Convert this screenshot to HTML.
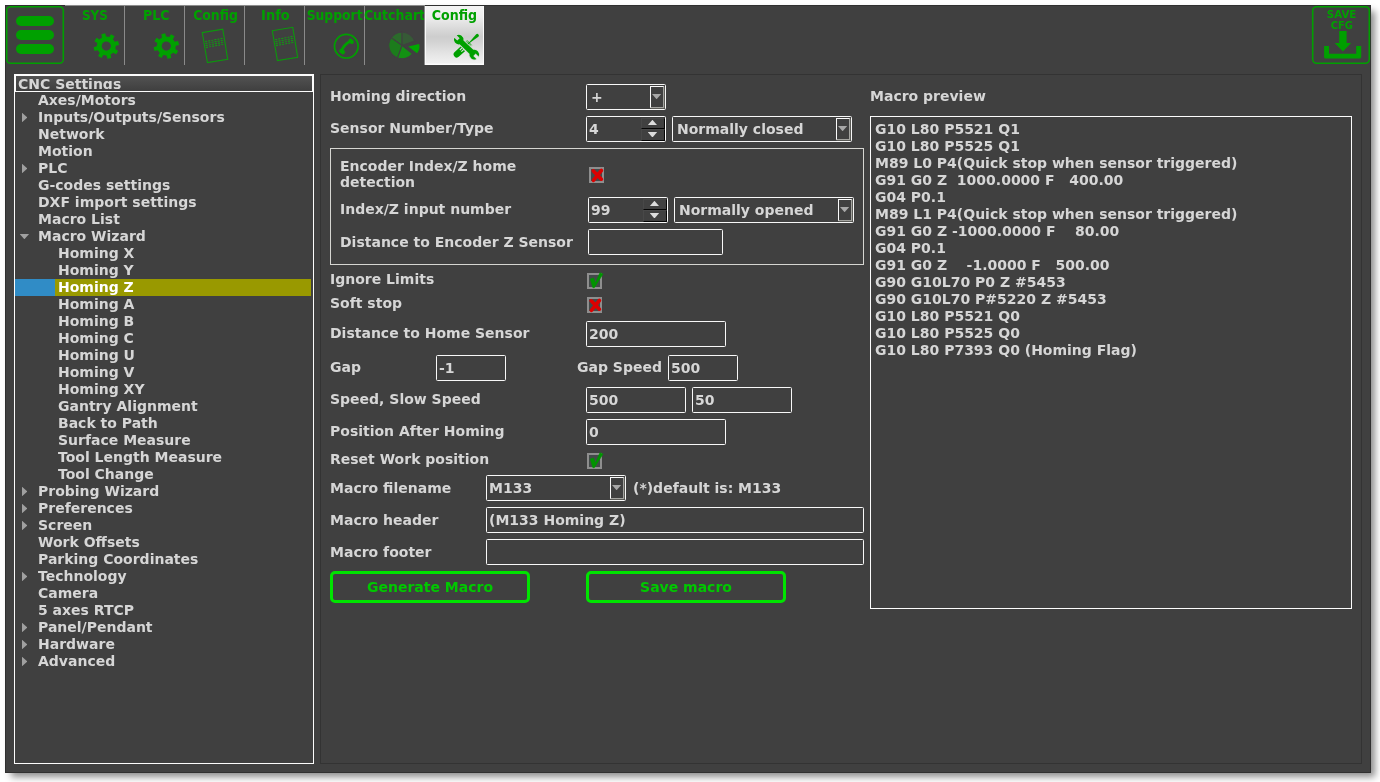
<!DOCTYPE html>
<html lang="en">
<head>
<meta charset="utf-8">
<title>CNC Settings - Macro Wizard - Homing Z</title>
<style>
*{box-sizing:border-box;margin:0;padding:0}
html,body{width:1380px;height:782px;overflow:hidden;background:#fff}
body{position:relative;font-family:"DejaVu Sans","Liberation Sans",sans-serif;font-weight:bold;font-size:14px;color:#d6d6d6;line-height:17px}
.abs{position:absolute}
#root{position:absolute;left:0;top:0;width:1380px;height:782px;background:#fff;will-change:transform;overflow:hidden}
#win{position:absolute;left:5px;top:5px;width:1366px;height:768px;background:#404040;border:1px solid #303030;box-shadow:5px 5px 7px -1px rgba(0,0,0,.45)}
/* toolbar */
.sq{position:absolute;width:58px;height:58px}
.bar{position:absolute;left:10px;width:38px;height:10.300px;border-radius:5.2px;background:#00a000}
.sep{position:absolute;top:6px;width:1px;height:59px;background:#8a8a8a}
.tab{position:absolute;top:6px;width:60px;height:59px;color:#00a000;text-align:center}
.tab b{position:absolute;left:-10px;right:-10px;top:.8px;font-family:"DejaVu Sans","Liberation Sans",sans-serif;font-size:13.5px;line-height:16px;font-weight:bold;white-space:nowrap;display:block;transform-origin:50% 50%}
.savetxt{left:-10px;right:-10px;top:4.300px;text-align:center;color:#00a000;font-family:"DejaVu Sans","Liberation Sans",sans-serif;font-size:11px;line-height:10.7px;transform:scaleX(.93)}
.tab svg{position:absolute}
.tab.act{width:59px;background:linear-gradient(#f4f4f4 0%,#ececec 20%,#d8d8d8 40%,#cdcdcd 52%,#d2d2d2 60%,#e4e4e4 80%,#f0f0f0 96%,#ffffff 100%);box-shadow:inset 1px 0 0 #fafafa,inset -1px 0 0 #fafafa}
/* tree */
#tree{position:absolute;left:14px;top:74px;width:300px;height:690px;border:1px solid #fcfcfc;background:#404040;overflow:hidden}
#thead{position:absolute;left:0;top:0;width:298px;height:17px;border:1px solid #fcfcfc;background:linear-gradient(#525252,#3f3f3f);overflow:hidden}
#thead .clip{position:absolute;left:0;top:0;right:0;height:13px;overflow:hidden}
#thead span{position:absolute;left:2px;top:0px;line-height:17px;white-space:nowrap}
#rows{position:absolute;left:0;top:17px;width:298px}
.row{position:relative;height:17px;line-height:17px;white-space:nowrap}
.row span{position:absolute;left:23px;top:0}
.row.c span{left:43px}
.row.sel{background:linear-gradient(90deg,#308cc6 0,#308cc6 40px,#999900 40px,#999900 296px,#404040 296px);color:#fff}
.ar{position:absolute;left:7px;top:3.800px;width:5.4px;height:9.5px;background:#a0a0a0;clip-path:polygon(0 0,100% 50%,0 100%)}
.ad{position:absolute;left:4.700px;top:6px;width:9.4px;height:5.2px;background:#a0a0a0;clip-path:polygon(0 0,100% 0,50% 100%)}
/* right panel */
#panel{position:absolute;left:320px;top:74px;width:1042px;height:690px;border:1px solid #333;background:#404040}
.lbl{position:absolute;white-space:nowrap;line-height:17px}
.inp{position:absolute;height:26px;border-radius:1.5px;border:1px solid #f8f8f8;background:#404040;line-height:24px;padding-left:2px;white-space:nowrap;overflow:hidden}
.cmb .dd{position:absolute;right:1px;top:1px;bottom:1px;width:14px;border:1px solid #fafafa;border-right:1px solid #a4a4a0;border-bottom:1px solid #a4a4a0;box-shadow:.5px .5px 0 #77776f}
.cmb .dd:after{content:"";position:absolute;left:1px;top:7px;width:9.2px;height:5.2px;background:#a8a8a8;clip-path:polygon(0 0,100% 0,50% 100%)}
.ne{padding-left:4px}
.spn .up,.spn .dn{position:absolute;right:0;width:24px;border:1px solid #484848;border-right-color:#050505;border-bottom-color:#050505}
.spn .up{top:1px;height:11px}
.spn .dn{top:12px;height:12px}
.spn .up:after{content:"";position:absolute;left:5.700px;top:.7px;width:9.5px;height:5.5px;background:#dcdcdc;clip-path:polygon(50% 0,100% 100%,0 100%)}
.spn .dn:after{content:"";position:absolute;left:5.700px;top:1.900px;width:9.5px;height:5.5px;background:#dcdcdc;clip-path:polygon(0 0,100% 0,50% 100%)}
.chk{position:absolute;width:15px;height:16px;border:2px solid #8e8e8e;background:#444a4a}
.chk svg{position:absolute;left:-4px;top:-4px}
.grp{position:absolute;border:1px solid #d6d6d2}
.btn{position:absolute;height:32px;width:200px;border:3px solid #00e400;border-radius:5px;color:#00c800;text-align:center;line-height:26px}
#prev{position:absolute;left:870px;top:116px;width:482px;height:493px;border:1px solid #fcfcfc;padding:4px 4px;white-space:pre;line-height:17px}
</style>
</head>
<body>
<div id="root">
<div id="win"></div>

<!-- toolbar -->
<div class="abs" style="left:65px;top:5px;width:360px;height:1px;background:#8c8c8c"></div>
<div class="sq" style="left:6px;top:6px"><div class="bar" style="top:10px"></div><div class="bar" style="top:23.8px"></div><div class="bar" style="top:37.6px"></div></div>
<div class="tab" style="left:65px"><b style="transform:scaleX(.885);margin-left:.3px">SYS</b></div>
<div class="sep" style="left:124px"></div>
<div class="tab" style="left:125px"><b style="transform:scaleX(.935);margin-left:1.5px">PLC</b></div>
<div class="sep" style="left:184px"></div>
<div class="tab" style="left:185px"><b style="transform:scaleX(.925);margin-left:.9px">Config</b></div>
<div class="sep" style="left:244px"></div>
<div class="tab" style="left:245px"><b style="transform:scaleX(.96);margin-left:1.2px">Info</b></div>
<div class="sep" style="left:304px"></div>
<div class="tab" style="left:305px"><b style="transform:scaleX(.916);margin-left:-1.2px">Support</b></div>
<div class="sep" style="left:364px"></div>
<div class="tab" style="left:365px"><b style="transform:scaleX(.93);margin-left:-1px">Cutchart</b></div>
<div class="sep" style="left:424px"></div>
<div class="tab act" style="left:425px"><b style="transform:scaleX(.935)">Config</b></div>
<div class="sq" style="left:1312px;top:6px">
<div class="abs savetxt" style="margin-left:.8px">SAVE</div><div class="abs savetxt" style="top:15px;margin-left:.5px;transform:scaleX(.9)">CFG</div>
</div>
<svg class="abs" style="left:0;top:0" width="1380" height="70" viewBox="0 0 1380 70"><rect x="6.7" y="6.7" width="56.6" height="56.6" rx="4" fill="none" stroke="#00a000" stroke-width="1.600"/><rect x="1312.7" y="6.7" width="56.6" height="56.6" rx="4" fill="none" stroke="#00a000" stroke-width="1.600"/><path d="M102.05 37.61 L101.30 34.32 L105.18 33.35 L106.07 36.60 L109.30 37.09 L111.09 34.23 L114.53 36.29 L112.85 39.22 L114.79 41.85 L118.08 41.10 L119.05 44.98 L115.80 45.87 L115.31 49.10 L118.17 50.89 L116.11 54.33 L113.18 52.65 L110.55 54.59 L111.30 57.88 L107.42 58.85 L106.53 55.60 L103.30 55.11 L101.51 57.97 L98.07 55.91 L99.75 52.98 L97.81 50.35 L94.52 51.10 L93.55 47.22 L96.80 46.33 L97.29 43.10 L94.43 41.31 L96.49 37.87 L99.42 39.55ZM101.70 46.10a4.6 4.6 0 1 0 9.2 0a4.6 4.6 0 1 0 -9.2 0Z" fill="#00a000" fill-rule="evenodd"/><path d="M162.05 37.61 L161.30 34.32 L165.18 33.35 L166.07 36.60 L169.30 37.09 L171.09 34.23 L174.53 36.29 L172.85 39.22 L174.79 41.85 L178.08 41.10 L179.05 44.98 L175.80 45.87 L175.31 49.10 L178.17 50.89 L176.11 54.33 L173.18 52.65 L170.55 54.59 L171.30 57.88 L167.42 58.85 L166.53 55.60 L163.30 55.11 L161.51 57.97 L158.07 55.91 L159.75 52.98 L157.81 50.35 L154.52 51.10 L153.55 47.22 L156.80 46.33 L157.29 43.10 L154.43 41.31 L156.49 37.87 L159.42 39.55ZM161.70 46.10a4.6 4.6 0 1 0 9.2 0a4.6 4.6 0 1 0 -9.2 0Z" fill="#00a000" fill-rule="evenodd"/><path d="M202.3 32.6 L222.8 29.2 L227.7 59.3 L207.4 62.5Z" fill="none" stroke="#0c980c" stroke-width="1.1"/><path d="M206.10 40.90l1.1 7.6" stroke="#10a010" stroke-width="2" stroke-dasharray="0.95 1.05" fill="none"/><path d="M209.16 40.34l1.1 7.6" stroke="#10a010" stroke-width="2" stroke-dasharray="0.95 1.05" fill="none"/><path d="M212.22 39.78l1.1 7.6" stroke="#10a010" stroke-width="2" stroke-dasharray="0.95 1.05" fill="none"/><path d="M215.28 39.22l1.1 7.6" stroke="#10a010" stroke-width="2" stroke-dasharray="0.95 1.05" fill="none"/><path d="M218.34 38.66l1.1 7.6" stroke="#10a010" stroke-width="2" stroke-dasharray="0.95 1.05" fill="none"/><path d="M221.40 38.10l1.1 7.6" stroke="#10a010" stroke-width="2" stroke-dasharray="0.95 1.05" fill="none"/><path d="M272.3 30.7 L292.8 27.3 L297.7 57.4 L277.4 60.6Z" fill="none" stroke="#0c980c" stroke-width="1.1"/><path d="M276.10 39.00l1.1 7.6" stroke="#10a010" stroke-width="2" stroke-dasharray="0.95 1.05" fill="none"/><path d="M279.16 38.44l1.1 7.6" stroke="#10a010" stroke-width="2" stroke-dasharray="0.95 1.05" fill="none"/><path d="M282.22 37.88l1.1 7.6" stroke="#10a010" stroke-width="2" stroke-dasharray="0.95 1.05" fill="none"/><path d="M285.28 37.32l1.1 7.6" stroke="#10a010" stroke-width="2" stroke-dasharray="0.95 1.05" fill="none"/><path d="M288.34 36.76l1.1 7.6" stroke="#10a010" stroke-width="2" stroke-dasharray="0.95 1.05" fill="none"/><path d="M291.40 36.20l1.1 7.6" stroke="#10a010" stroke-width="2" stroke-dasharray="0.95 1.05" fill="none"/><circle cx="346.3" cy="46.2" r="11.8" fill="none" stroke="#00a000" stroke-width="1.7"/><g transform="translate(346.3 46.2)" fill="none" stroke="#00a000" stroke-linecap="round"><path d="M-4.600 5.100 Q-3.200 -1.500 4.700 -5.200" stroke-width="2.700"/><path d="M-4.900 4.600l1.500 1.300" stroke-width="4.300"/><path d="M4.300 -5.600l1.200 1.300" stroke-width="4.100"/></g><path d="M402.10 45.50L391.21 37.87A13.3 13.3 0 0 1 402.10 32.20Z" fill="#2b6b2b" stroke="#404040" stroke-width="1.050" stroke-linejoin="round"/><path d="M402.10 45.50L402.10 32.20A13.3 13.3 0 0 1 414.60 40.95Z" fill="#365a36" stroke="#404040" stroke-width="1.050" stroke-linejoin="round"/><path d="M402.10 45.50L397.55 58.00A13.3 13.3 0 0 1 391.21 37.87Z" fill="#1c7c1c" stroke="#404040" stroke-width="1.050" stroke-linejoin="round"/><path d="M402.10 45.50L412.44 53.87A13.3 13.3 0 0 1 397.55 58.00Z" fill="#139113" stroke="#404040" stroke-width="1.050" stroke-linejoin="round"/><path d="M408.30 46.40L419.12 43.90A11.1 11.1 0 0 1 417.05 53.23Z" fill="#00a800"/><g transform="translate(454.5 56.4) rotate(-42.5)" fill="#00a000"><path d="M3.2 -3.2H11.3V-1.650H8.300V-0.550H11.3V0.550H8.300V1.650H11.3V3.200H3.2A3.2 3.2 0 0 1 3.2 -3.2Z"/><path d="M16.500 -0.550H21.400L30.900 -1.600A1.600 1.600 0 0 1 30.900 1.600L21.400 0.550H16.500Z"/><path d="M18.700 -3.400V3.400M20.100 -3.400V3.400" stroke="#00a000" stroke-width=".8"/></g><g transform="translate(458.7 39.6) rotate(44)"><path d="M-4.53 -1.7A4.85 4.85 0 0 1 3.97 -2.75L17.63 -2.75A4.85 4.85 0 0 1 26.13 -1.7L21.90 -1.7L21.90 1.7L26.13 1.7A4.85 4.85 0 0 1 17.63 2.75L3.97 2.75A4.85 4.85 0 0 1 -4.53 1.7L-0.3 1.7L-0.3 -1.7Z" fill="#00a000" stroke="#d6d6d6" stroke-width="1.4" paint-order="stroke"/></g><path d="M1339.2 30.9h7.4v12.1h4.5l-8.2 8.6l-8.200 -8.600h4.500z" fill="#00a000"/><path d="M1324.1 46.100h4.900v7.600h27.200v-7.600h5v11a1.500 1.500 0 0 1 -1.500 1.500h-34.100a1.500 1.500 0 0 1 -1.500 -1.500z" fill="#00a000"/></svg>

<!-- tree -->
<div id="tree">
<div id="thead"><div class="clip"><span>CNC Settings</span></div></div>
<div id="rows">
<div class="row"><span>Axes/Motors</span></div>
<div class="row"><i class="ar"></i><span>Inputs/Outputs/Sensors</span></div>
<div class="row"><span>Network</span></div>
<div class="row"><span>Motion</span></div>
<div class="row"><i class="ar"></i><span>PLC</span></div>
<div class="row"><span>G-codes settings</span></div>
<div class="row"><span>DXF import settings</span></div>
<div class="row"><span>Macro List</span></div>
<div class="row"><i class="ad"></i><span>Macro Wizard</span></div>
<div class="row c"><span>Homing X</span></div>
<div class="row c"><span>Homing Y</span></div>
<div class="row c sel"><span>Homing Z</span></div>
<div class="row c"><span>Homing A</span></div>
<div class="row c"><span>Homing B</span></div>
<div class="row c"><span>Homing C</span></div>
<div class="row c"><span>Homing U</span></div>
<div class="row c"><span>Homing V</span></div>
<div class="row c"><span>Homing XY</span></div>
<div class="row c"><span>Gantry Alignment</span></div>
<div class="row c"><span>Back to Path</span></div>
<div class="row c"><span>Surface Measure</span></div>
<div class="row c"><span>Tool Length Measure</span></div>
<div class="row c"><span>Tool Change</span></div>
<div class="row"><i class="ar"></i><span>Probing Wizard</span></div>
<div class="row"><i class="ar"></i><span>Preferences</span></div>
<div class="row"><i class="ar"></i><span>Screen</span></div>
<div class="row"><span>Work Offsets</span></div>
<div class="row"><span>Parking Coordinates</span></div>
<div class="row"><i class="ar"></i><span>Technology</span></div>
<div class="row"><span>Camera</span></div>
<div class="row"><span>5 axes RTCP</span></div>
<div class="row"><i class="ar"></i><span>Panel/Pendant</span></div>
<div class="row"><i class="ar"></i><span>Hardware</span></div>
<div class="row"><i class="ar"></i><span>Advanced</span></div>
</div>
</div>

<!-- right panel -->
<div id="panel"></div>

<div class="lbl" style="left:330px;top:88px">Homing direction</div>
<div class="inp cmb ne" style="left:586px;top:84px;width:80px">+<div class="dd"></div></div>

<div class="lbl" style="left:330px;top:120px">Sensor Number/Type</div>
<div class="inp spn" style="left:586px;top:116px;width:80px">4<div class="up"></div><div class="dn"></div></div>
<div class="inp cmb ne" style="left:672px;top:116px;width:180px">Normally closed<div class="dd"></div></div>

<div class="grp" style="left:330px;top:148px;width:534px;height:117px"></div>
<div class="lbl" style="left:340px;top:158px;line-height:16px;white-space:normal;width:230px">Encoder Index/Z home detection</div>
<div class="chk" style="left:589px;top:167px"><svg width="22" height="22" viewBox="0 0 22 22"><use href="#xm"/></svg></div>
<div class="lbl" style="left:340px;top:201px">Index/Z input number</div>
<div class="inp spn" style="left:588px;top:197px;width:80px">99<div class="up"></div><div class="dn"></div></div>
<div class="inp cmb ne" style="left:674px;top:197px;width:180px">Normally opened<div class="dd"></div></div>
<div class="lbl" style="left:340px;top:234px">Distance to Encoder Z Sensor</div>
<div class="inp" style="left:588px;top:229px;width:135px"></div>

<div class="lbl" style="left:330px;top:271px">Ignore Limits</div>
<div class="chk" style="left:587px;top:273px"><svg width="22" height="22" viewBox="0 0 22 22"><use href="#ck"/></svg></div>
<div class="lbl" style="left:330px;top:295px">Soft stop</div>
<div class="chk" style="left:587px;top:297px"><svg width="22" height="22" viewBox="0 0 22 22"><use href="#xm"/></svg></div>

<div class="lbl" style="left:330px;top:325px">Distance to Home Sensor</div>
<div class="inp" style="left:586px;top:321px;width:140px">200</div>

<div class="lbl" style="left:330px;top:359px">Gap</div>
<div class="inp" style="left:436px;top:355px;width:70px">-1</div>
<div class="lbl" style="left:577px;top:359px">Gap Speed</div>
<div class="inp" style="left:668px;top:355px;width:70px">500</div>

<div class="lbl" style="left:330px;top:391px">Speed, Slow Speed</div>
<div class="inp" style="left:586px;top:387px;width:100px">500</div>
<div class="inp" style="left:692px;top:387px;width:100px">50</div>

<div class="lbl" style="left:330px;top:423px">Position After Homing</div>
<div class="inp" style="left:586px;top:419px;width:140px">0</div>

<div class="lbl" style="left:330px;top:451px">Reset Work position</div>
<div class="chk" style="left:587px;top:453px"><svg width="22" height="22" viewBox="0 0 22 22"><use href="#ck"/></svg></div>

<div class="lbl" style="left:330px;top:480px">Macro filename</div>
<div class="inp cmb" style="left:486px;top:475px;width:140px">M133<div class="dd"></div></div>
<div class="lbl" style="left:633px;top:480px">(*)default is: M133</div>

<div class="lbl" style="left:330px;top:512px">Macro header</div>
<div class="inp" style="left:486px;top:507px;width:378px">(M133 Homing Z)</div>
<div class="lbl" style="left:330px;top:544px">Macro footer</div>
<div class="inp" style="left:486px;top:539px;width:378px"></div>

<div class="btn" style="left:330px;top:571px">Generate Macro</div>
<div class="btn" style="left:586px;top:571px">Save macro</div>

<div class="lbl" style="left:870px;top:88px">Macro preview</div>
<div id="prev">G10 L80 P5521 Q1
G10 L80 P5525 Q1
M89 L0 P4(Quick stop when sensor triggered)
G91 G0 Z  1000.0000 F   400.00
G04 P0.1
M89 L1 P4(Quick stop when sensor triggered)
G91 G0 Z -1000.0000 F    80.00
G04 P0.1
G91 G0 Z    -1.0000 F   500.00
G90 G10L70 P0 Z #5453
G90 G10L70 P#5220 Z #5453
G10 L80 P5521 Q0
G10 L80 P5525 Q0
G10 L80 P7393 Q0 (Homing Flag)</div>

<svg width="0" height="0" style="position:absolute"><defs>
<g id="xm"><path d="M6.200 5.800L14.400 14.200M14.400 5.500L6.400 15.300" fill="none" stroke="#dd0000" stroke-width="3.600" stroke-linecap="round"/></g>
<g id="ck"><path d="M5.200 8L8.600 7L10.400 12L14.900 1.800L18 3L9.300 16.700L7.900 16.700Z" fill="#009400" stroke="#009400" stroke-width=".6" stroke-linejoin="round"/></g>
</defs></svg>
</div>
</body>
</html>
